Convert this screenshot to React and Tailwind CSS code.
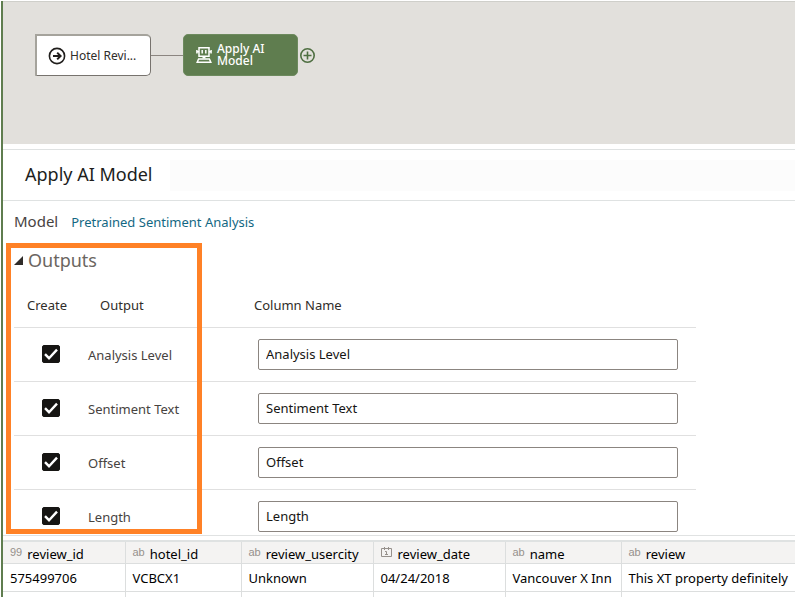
import React from "react";

const outputs = ["Analysis Level", "Sentiment Text", "Offset", "Length"];

const columns = [
  { type: "99", name: "review_id", value: "575499706", width: "w-[122px]" },
  { type: "ab", name: "hotel_id", value: "VCBCX1", width: "w-[116px]" },
  { type: "ab", name: "review_usercity", value: "Unknown", width: "w-[132px]" },
  { type: "date", name: "review_date", value: "04/24/2018", width: "w-[132px]" },
  { type: "ab", name: "name", value: "Vancouver X Inn", width: "w-[116px]" },
  { type: "ab", name: "review", value: "This XT property definitely", width: "" },
];

function ArrowCircle() {
  return (
    <svg width="18" height="18" viewBox="0 0 18 18" fill="none" stroke="#201e1c" strokeWidth="1.6" className="shrink-0" aria-hidden="true">
      <circle cx="9" cy="9" r="7.6" />
      <path strokeWidth="2" d="M5 9h7.4M9.2 5.6 12.6 9l-3.4 3.4" />
    </svg>
  );
}

function Robot() {
  return (
    <svg width="16" height="16" viewBox="0 0 16 16" fill="none" stroke="#fff" strokeWidth="1.5" className="shrink-0" aria-hidden="true">
      <path d="M3 .8h10v8.4H3z" />
      <path d="M6.2 3v3.6M9.8 3v3.6M.9 3v3.4M15.1 3v3.4M1 4.8h2M13 4.8h2" />
      <path strokeWidth="3" d="M8 9v2.5" />
      <path d="M2.6 12h10.8l1.4 3.2H1.2z" />
    </svg>
  );
}

function PlusCircle() {
  return (
    <svg width="15" height="15" viewBox="0 0 15 15" fill="none" stroke="#4f6f42" strokeWidth="1.6" aria-hidden="true">
      <circle cx="7.5" cy="7.5" r="6.7" />
      <path d="M7.5 3.5v8M3.5 7.5h8" />
    </svg>
  );
}

function CalendarIcon() {
  return (
    <svg width="11" height="10" viewBox="0 0 11 10" fill="none" stroke="#96918c" className="mr-[6px] mb-1 shrink-0" aria-hidden="true">
      <path d="M.5 1.5h10v8H.5zM3.5 0v3M7.5 0v3M4 4.5h1.5v3M4 7.5h3" />
    </svg>
  );
}

function Flow() {
  return (
    <section className="flex h-[143px] items-start border-t border-[#cfcfca] bg-[#e2e0dc] pt-8 pl-8">
      <div className="flex h-[42px] items-center">
        <button className="flex h-full w-[116px] items-center gap-1 rounded-r-[5px] border border-t-2 border-l-2 border-[#a5a39c] border-r-[#77736e] border-b-[#77736e] bg-white pl-[11px] text-[12px] text-[#302d2a]">
          <ArrowCircle />
          <span>Hotel Revi...</span>
        </button>
        <div className="h-px w-8 bg-[#8b8580]" />
        <button className="flex h-full w-[115px] items-center gap-[5px] rounded-[5px] border border-[#6d8a5e] bg-[#5f7d4f] pl-3 text-left text-[12px] leading-3 font-medium text-white">
          <Robot />
          <span className="w-[60px]">Apply AI Model</span>
        </button>
        <button aria-label="Add step" className="ml-[2px]">
          <PlusCircle />
        </button>
      </div>
    </section>
  );
}

function Outputs() {
  return (
    <section className="relative h-[293px] overflow-hidden border-b border-[#e0e2e2]">
      <div className="pointer-events-none absolute top-0 left-[3px] h-[291px] w-[196px] border-5 border-[#ff8126]" />
      <h2 className="flex h-[34px] items-center gap-[5px] pl-[11px] text-[18px] text-[#6b6661]">
        <svg width="9" height="9" viewBox="0 0 9 9" aria-hidden="true"><path d="M9 0v9H0z" fill="#302d2a" /></svg>
        Outputs
      </h2>
      <div className="pr-[99px] pl-[11px]">
        <table className="w-full table-fixed text-[13px] text-[#302d2a]">
          <thead>
            <tr className="h-[50px] border-b border-[#e0e0e0] text-left">
              <th className="w-[74px] pt-2 pl-[13px] font-normal">Create</th>
              <th className="w-[166px] pt-2 pl-3 font-normal">Output</th>
              <th className="pt-2 font-normal">Column Name</th>
            </tr>
          </thead>
          <tbody>
            {outputs.map((name) => (
              <tr key={name} className="h-[54px] border-b border-[#e0e0e0]">
                <td className="pl-7">
                  <span className="relative block size-[18px]">
                    <input
                      type="checkbox"
                      defaultChecked
                      aria-label={"Create " + name}
                      className="block size-[18px] appearance-none rounded-[2px] border border-[#161513] checked:bg-[#161513]"
                    />
                    <svg viewBox="0 0 18 18" className="pointer-events-none absolute inset-0" fill="none" stroke="#fff" strokeWidth="2.4" aria-hidden="true">
                      <path d="m3 9.2 4 4 8-8.6" />
                    </svg>
                  </span>
                </td>
                <td className="pt-1 text-[#47433f]">{name}</td>
                <td className="pr-[18px] pl-1">
                  <input
                    type="text"
                    defaultValue={name}
                    aria-label={"Column name for " + name}
                    className="block h-[31px] w-full rounded-[2px] border border-[#8b8580] bg-white px-[7px] text-[#161513]"
                  />
                </td>
              </tr>
            ))}
          </tbody>
        </table>
      </div>
    </section>
  );
}

function Preview() {
  return (
    <table className="mt-1 w-full table-fixed border-t-2 border-[#dfe2e2] text-[13px] text-black">
      <thead>
        <tr className="h-[22px] border-b border-[#dcdede] bg-[#f4f3f2] text-left">
          {columns.map((c) => (
            <th key={c.name} className={"border-r border-[#dcdede] p-0 pt-[3px] pl-[7px] font-normal last:border-r-0 " + c.width}>
              <span className="flex items-center leading-[18px] whitespace-nowrap">
                {c.type === "date" ? (
                  <CalendarIcon />
                ) : (
                  <span className="mr-[5px] mb-1 font-['Liberation_Sans',sans-serif] text-[11px] leading-3 text-[#96918c]">{c.type}</span>
                )}
                <span>{c.name}</span>
              </span>
            </th>
          ))}
        </tr>
      </thead>
      <tbody>
        <tr className="h-7 border-b border-[#dcdede]">
          {columns.map((c) => (
            <td key={c.name} className="overflow-hidden border-r border-[#dcdede] p-0 pt-[3px] pl-[7px] whitespace-nowrap last:border-r-0">
              {c.value}
            </td>
          ))}
        </tr>
        <tr className="h-[5px]">
          {columns.map((c) => (
            <td key={c.name} className="border-r border-[#dcdede] p-0 last:border-r-0" />
          ))}
        </tr>
      </tbody>
    </table>
  );
}

export default function App() {
  return (
    <div className="bg-white pt-px pl-px font-['Noto_Sans',sans-serif]">
      <main className="border-l-2 border-[#5f7d4f]">
        <Flow />
        <header className="mt-[5px] flex h-[52px] items-center border-y border-[#dfe2e2] pl-[22px]">
          <h1 className="w-[145px] pb-[2px] text-[18px] text-[#201e1c]">Apply AI Model</h1>
          <div className="h-[31px] flex-1 bg-[#fcfcfc]" />
        </header>
        <div className="flex h-[42px] items-baseline gap-[13px] pt-[9px] pl-[11px]">
          <span className="text-[15px] text-[#47433f]">Model</span>
          <a href="#model" className="text-[13px] text-[#136883]">Pretrained Sentiment Analysis</a>
        </div>
        <Outputs />
        <Preview />
      </main>
    </div>
  );
}
